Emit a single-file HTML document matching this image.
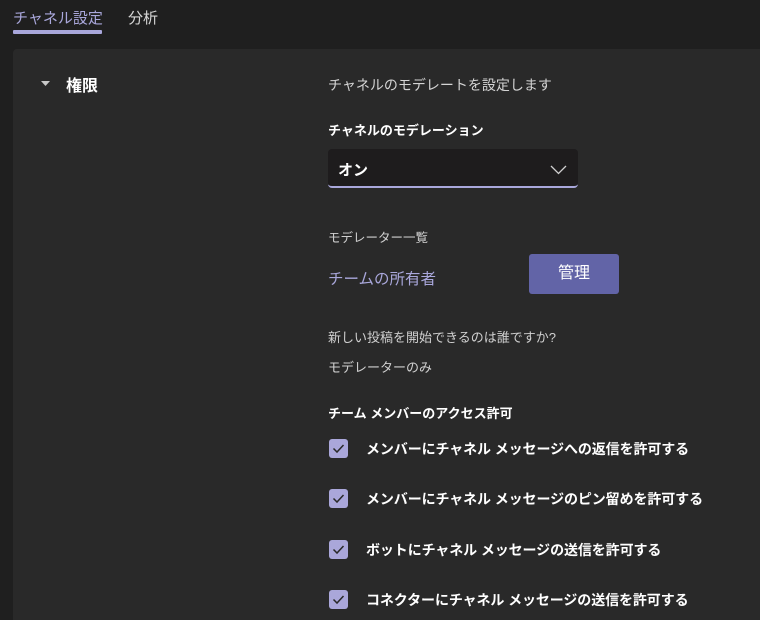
<!DOCTYPE html>
<html><head><meta charset="utf-8"><style>
*{margin:0;padding:0;box-sizing:border-box}
html,body{width:760px;height:620px;overflow:hidden}
body{background:#1f1f1f;font-family:"Liberation Sans","Noto Sans CJK JP",sans-serif;color:#fff;position:relative}
.a{position:absolute;white-space:nowrap}
.tab{font-size:15px;top:7px}
.panel{position:absolute;left:13px;top:49px;width:747px;height:571px;background:#292929;border-radius:4px 0 0 0}
.cb{position:absolute;left:329px;width:19px;height:19px;border-radius:3px;background:#aaa7da}
.cb svg{position:absolute;left:3px;top:4px}
.cl{left:366px;font-size:14px;font-weight:bold;color:#fff;letter-spacing:-0.1px}
</style></head><body>
<div class="a tab" style="left:13px;color:#a9a7db">チャネル設定</div>
<div class="a" style="left:13px;top:30px;width:89px;height:4px;background:#a9a7db;border-radius:1px"></div>
<div class="a tab" style="left:128px;color:#d6d6d6">分析</div>
<div class="panel"></div>
<svg class="a" style="left:41px;top:81px" width="9" height="6"><path d="M0 0L9 0L4.5 5Z" fill="#c8c8c8"/></svg>
<div class="a" style="left:66px;top:72px;font-size:16px;font-weight:bold">権限</div>
<div class="a" style="left:328px;top:75px;font-size:14px;color:#d4d4d4">チャネルのモデレートを設定します</div>
<div class="a" style="left:328px;top:120px;font-size:13px;font-weight:bold">チャネルのモデレーション</div>
<div class="a" style="left:328px;top:149px;width:250px;height:39px;background:#1e1c1d;border-radius:4px;border-bottom:2px solid #a9a7db"></div>
<div class="a" style="left:338px;top:159px;font-size:15px;font-weight:bold">オン</div>
<svg class="a" style="left:550px;top:165px" width="17" height="10"><path d="M1 1L8.5 8.5L16 1" stroke="#d0d0d0" stroke-width="1.3" fill="none"/></svg>
<div class="a" style="left:328px;top:227px;font-size:12.5px;color:#d0d0d0">モデレーター一覧</div>
<div class="a" style="left:328px;top:267px;font-size:15.5px;color:#a9a7db">チームの所有者</div>
<div class="a" style="left:529px;top:254px;width:90px;height:40px;background:#6264a7;border-radius:3px;font-size:16px;text-align:center;line-height:40px">管理</div>
<div class="a" style="left:328px;top:327px;font-size:13px;color:#d0d0d0">新しい投稿を開始できるのは誰ですか?</div>
<div class="a" style="left:328px;top:357px;font-size:13px;color:#d0d0d0">モデレーターのみ</div>
<div class="a" style="left:328px;top:403px;font-size:13px;font-weight:bold">チーム メンバーのアクセス許可</div>
<div class="cb" style="top:439px"><svg width="13" height="11"><path d="M1.5 5.5L5 9L11.5 2" stroke="#292929" stroke-width="1.5" fill="none"/></svg></div>
<div class="a cl" style="top:439px">メンバーにチャネル メッセージへの返信を許可する</div>
<div class="cb" style="top:489px"><svg width="13" height="11"><path d="M1.5 5.5L5 9L11.5 2" stroke="#292929" stroke-width="1.5" fill="none"/></svg></div>
<div class="a cl" style="top:489px">メンバーにチャネル メッセージのピン留めを許可する</div>
<div class="cb" style="top:540px"><svg width="13" height="11"><path d="M1.5 5.5L5 9L11.5 2" stroke="#292929" stroke-width="1.5" fill="none"/></svg></div>
<div class="a cl" style="top:540px">ボットにチャネル メッセージの送信を許可する</div>
<div class="cb" style="top:590px"><svg width="13" height="11"><path d="M1.5 5.5L5 9L11.5 2" stroke="#292929" stroke-width="1.5" fill="none"/></svg></div>
<div class="a cl" style="top:590px">コネクターにチャネル メッセージの送信を許可する</div>
</body></html>
